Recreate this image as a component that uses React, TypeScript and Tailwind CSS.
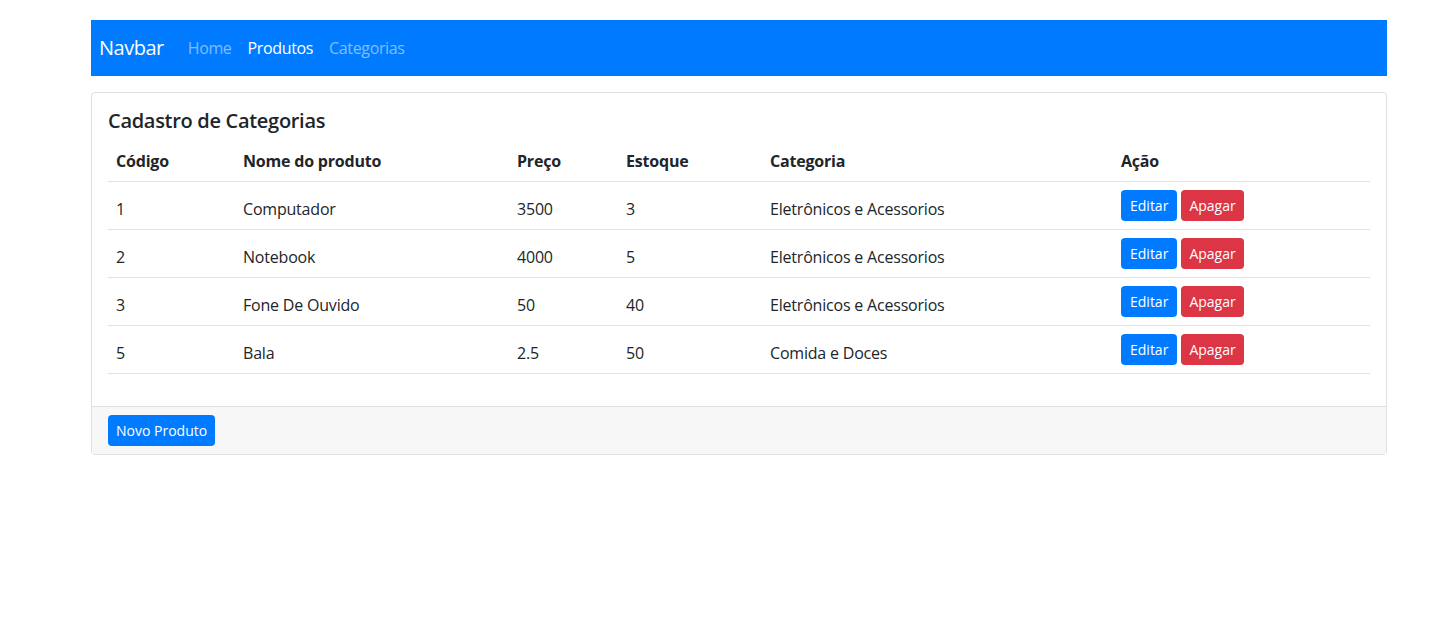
import React from "react";

const rows = [
  { id: "1", nome: "Computador", preco: "3500", estoque: "3", cat: "Eletrônicos e Acessorios" },
  { id: "2", nome: "Notebook", preco: "4000", estoque: "5", cat: "Eletrônicos e Acessorios" },
  { id: "3", nome: "Fone De Ouvido", preco: "50", estoque: "40", cat: "Eletrônicos e Acessorios" },
  { id: "5", nome: "Bala", preco: "2.5", estoque: "50", cat: "Comida e Doces" },
];

export default function App() {
  return (
    <div
      className="min-h-[633px] bg-white text-[#212529]"
      style={{ fontFamily: '"Open Sans", "Noto Sans", sans-serif' }}
    >
      <div className="ml-[91px] w-[1296px] pt-5">
        <nav className="flex h-14 items-center bg-[#007bff] px-2">
          <span className="mr-4 py-[5px] text-xl leading-[30px] tracking-[-0.5px] text-white">Navbar</span>
          <a className="px-2 py-2 text-base leading-6 tracking-[-0.35px] text-white/50">Home</a>
          <a className="px-2 py-2 text-base leading-6 tracking-[-0.35px] text-white">Produtos</a>
          <a className="px-2 py-2 text-base leading-6 tracking-[-0.35px] text-white/50">Categorias</a>
        </nav>

        <div className="mt-4 rounded border border-[#dfdfdf]">
          <div className="p-4">
            <h5 className="mb-2 text-xl font-semibold leading-6 tracking-[-0.3px]">Cadastro de Categorias</h5>
            <table className="mb-4 w-full table-fixed border-collapse text-base leading-6 tracking-[-0.2px]">
              <colgroup>
                <col className="w-[127px]" />
                <col className="w-[274px]" />
                <col className="w-[109px]" />
                <col className="w-[144px]" />
                <col className="w-[351px]" />
                <col />
              </colgroup>
              <thead>
                <tr className="border-b border-[#dee2e6]">
                  <th className="p-2 text-left font-bold">Código</th>
                  <th className="p-2 text-left font-bold">Nome do produto</th>
                  <th className="p-2 text-left font-bold">Preço</th>
                  <th className="p-2 text-left font-bold">Estoque</th>
                  <th className="p-2 text-left font-bold">Categoria</th>
                  <th className="p-2 text-left font-bold">Ação</th>
                </tr>
              </thead>
              <tbody>
                {rows.map((r) => (
                  <tr key={r.id} className="border-b border-[#dee2e6]">
                    <td className="p-2 align-bottom">{r.id}</td>
                    <td className="p-2 align-bottom">{r.nome}</td>
                    <td className="p-2 align-bottom">{r.preco}</td>
                    <td className="p-2 align-bottom">{r.estoque}</td>
                    <td className="p-2 align-bottom">{r.cat}</td>
                    <td className="p-2 align-top">
                      <div className="flex gap-1 tracking-normal">
                        <button className="h-[31px] rounded bg-[#007bff] px-[9px] text-sm leading-[21px] text-white">
                          Editar
                        </button>
                        <button className="h-[31px] rounded bg-[#dc3545] px-2 text-sm leading-[21px] text-white">
                          Apagar
                        </button>
                      </div>
                    </td>
                  </tr>
                ))}
              </tbody>
            </table>
          </div>
          <div className="border-t border-[#dfdfdf] bg-[#f7f7f7] px-4 py-2">
            <button className="h-[31px] rounded bg-[#007bff] px-2 text-sm leading-[21px] text-white">
              Novo Produto
            </button>
          </div>
        </div>
      </div>
    </div>
  );
}
